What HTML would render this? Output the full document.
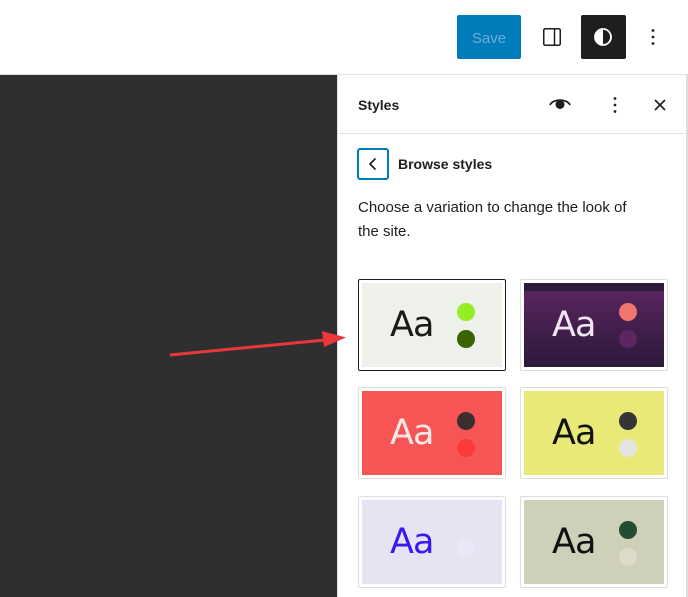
<!DOCTYPE html>
<html><head><style>
*{margin:0;padding:0;box-sizing:border-box}
body{width:688px;height:597px;overflow:hidden;background:#fff;font-family:"Liberation Sans",sans-serif;position:relative}
.abs{position:absolute}
.card{position:absolute;width:148px;height:92px;border:1px solid #ddd;border-radius:2px;background:#fff;padding:3px}
.card.sel{border:1px solid #1e1e1e}
.in{width:100%;height:100%;position:relative;overflow:hidden}
.aa{position:absolute;left:28px;top:22px;font-size:35px;line-height:40px;font-family:"DejaVu Sans","Liberation Sans",sans-serif;letter-spacing:-1px}
.dot{position:absolute;width:18px;height:18px;border-radius:50%;left:95px}
</style></head><body>
<div class="abs" style="left:0;top:74px;width:688px;height:1px;background:#e0e0e0"></div>
<div class="abs" style="left:457px;top:15px;width:64px;height:44px;background:#007cba;border-radius:2px;color:#6aaed6;font-size:15px;line-height:48px;text-align:center">Save</div>
<svg class="abs" style="left:540px;top:25px" width="24" height="24" viewBox="0 0 24 24"><rect x="3.75" y="3.75" width="16.5" height="16.5" rx="1.5" fill="none" stroke="#1e1e1e" stroke-width="1.5"/><line x1="14.5" y1="4" x2="14.5" y2="20" stroke="#1e1e1e" stroke-width="1.5"/></svg>
<div class="abs" style="left:581px;top:15px;width:45px;height:44px;background:#1e1e1e;border-radius:2px"></div>
<svg class="abs" style="left:591px;top:25px" width="24" height="24" viewBox="0 0 24 24"><circle cx="12" cy="12" r="8" fill="none" stroke="#fff" stroke-width="1.8"/><path d="M12 4a8 8 0 0 0 0 16z" fill="#fff"/></svg>
<svg class="abs" style="left:641px;top:25px" width="24" height="24" viewBox="0 0 24 24"><circle cx="12" cy="5.5" r="1.4" fill="#1e1e1e"/><circle cx="12" cy="12" r="1.4" fill="#1e1e1e"/><circle cx="12" cy="18.5" r="1.4" fill="#1e1e1e"/></svg>
<div class="abs" style="left:0;top:75px;width:337px;height:522px;background:#2f2f2f"></div>
<div class="abs" style="left:337px;top:75px;width:1px;height:522px;background:#e0e0e0"></div>
<div class="abs" style="left:686px;top:75px;width:2px;height:522px;background:#ddd"></div>
<div class="abs" style="left:358px;top:97px;font-size:14px;font-weight:bold;color:#1e1e1e">Styles</div>
<svg class="abs" style="left:548px;top:92px" width="24" height="24" viewBox="0 0 24 24"><path d="M2 13C5 6.5 19 6.5 22 13" fill="none" stroke="#1e1e1e" stroke-width="1.8"/><circle cx="12" cy="12.5" r="4.5" fill="#1e1e1e"/></svg>
<svg class="abs" style="left:603px;top:93px" width="24" height="24" viewBox="0 0 24 24"><circle cx="12" cy="5.5" r="1.4" fill="#1e1e1e"/><circle cx="12" cy="12" r="1.4" fill="#1e1e1e"/><circle cx="12" cy="18.5" r="1.4" fill="#1e1e1e"/></svg>
<svg class="abs" style="left:648px;top:93px" width="24" height="24" viewBox="0 0 24 24"><path d="M7 7l10 10M17 7L7 17" stroke="#1e1e1e" stroke-width="1.6"/></svg>
<div class="abs" style="left:338px;top:133px;width:348px;height:1px;background:#e0e0e0"></div>
<div class="abs" style="left:357px;top:148px;width:32px;height:32px;border:2px solid #007cba;border-radius:3px"></div>
<svg class="abs" style="left:361px;top:152px" width="24" height="24" viewBox="0 0 24 24"><path d="M14.5 6.5L9 12l5.5 5.5" fill="none" stroke="#1e1e1e" stroke-width="1.6"/></svg>
<div class="abs" style="left:398px;top:156px;font-size:14px;font-weight:bold;color:#1e1e1e">Browse styles</div>
<div class="abs" style="left:358px;top:196px;width:320px;font-size:15px;line-height:24px;color:#1e1e1e;white-space:nowrap">Choose a variation to change the look of<br>the site.</div>

<div class="card sel" style="left:358px;top:279px"><div class="in" style="background:#edf1e9"><div class="aa" style="color:#1a1a1a">Aa</div><div class="dot" style="top:20px;background:#97ec25"></div><div class="dot" style="top:47px;background:#3a6303"></div></div></div>
<div class="card" style="left:520px;top:279px"><div class="in" style="background:linear-gradient(#5d2562,#2b1a3a)"><div style="position:absolute;left:0;top:0;width:100%;height:8px;background:#2b1a3a"></div><div class="aa" style="color:#f0e6f0">Aa</div><div class="dot" style="top:20px;background:#f1756f"></div><div class="dot" style="top:47px;background:#5e2563"></div></div></div>
<div class="card" style="left:358px;top:387px"><div class="in" style="background:#f75555"><div class="aa" style="color:#fde8e8">Aa</div><div class="dot" style="top:21px;background:#3c2e2e"></div><div class="dot" style="top:48px;background:#fb3a3a"></div></div></div>
<div class="card" style="left:520px;top:387px"><div class="in" style="background:#e8e977"><div class="aa" style="color:#111">Aa</div><div class="dot" style="top:21px;background:#353535"></div><div class="dot" style="top:48px;background:#e3e3e0"></div></div></div>
<div class="card" style="left:358px;top:496px"><div class="in" style="background:#e6e4f2"><div class="aa" style="color:#3b17f2">Aa</div><div class="dot" style="top:39px;background:#ebe7f8"></div></div></div>
<div class="card" style="left:520px;top:496px"><div class="in" style="background:#cfd0ba"><div class="aa" style="color:#111">Aa</div><div class="dot" style="top:21px;background:#224d33"></div><div class="dot" style="top:48px;background:#dcdac8"></div></div></div>

<svg class="abs" style="left:0;top:0" width="688" height="597"><line x1="170" y1="355" x2="330" y2="339.5" stroke="#e8383a" stroke-width="3"/><path d="M346 337.5L322 331L324 347z" fill="#e8383a"/></svg>
</body></html>
